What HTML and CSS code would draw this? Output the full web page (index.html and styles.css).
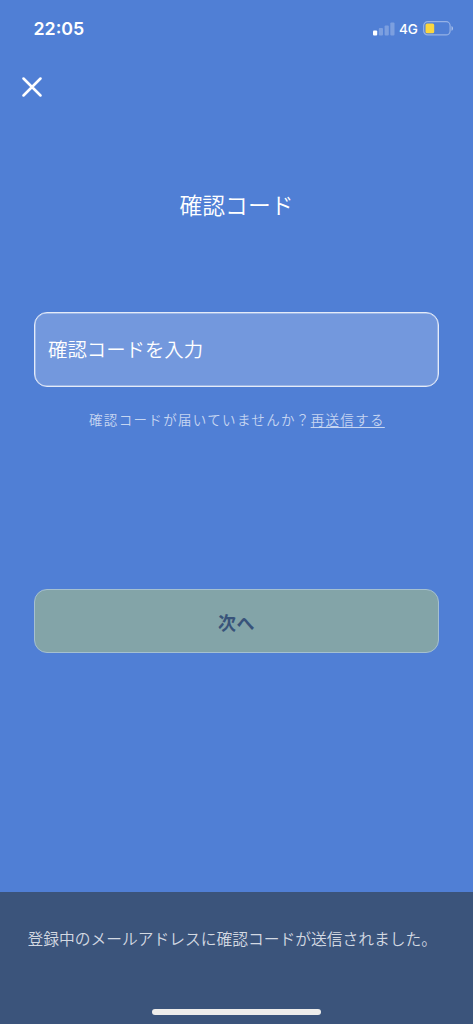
FILE: index.html
```html
<!DOCTYPE html>
<html lang="ja">
<head>
<meta charset="utf-8">
<title>確認コード</title>
<link rel="stylesheet" href="styles.css">
</head>
<body>
<div class="screen">
  <header class="status">
    <span class="time">22:05</span>
    <div class="indicators">
      <svg class="signal" width="22" height="14" viewBox="0 0 22 14" fill="#fff">
        <rect x="0" y="8.500" width="4.2" height="5" rx="1"/>
        <g opacity=".25"><rect x="5.8" y="6" width="4.2" height="7.5" rx="1"/><rect x="11.6" y="3.500" width="4.2" height="10" rx="1"/><rect x="17.3" y=".5" width="4.2" height="13" rx="1"/></g>
      </svg>
      <span class="network">4G</span>
      <svg class="battery" width="31" height="15" viewBox="0 0 31 15">
        <rect x=".7" y=".7" width="26.4" height="13.2" rx="4" fill="none" stroke="#fff" stroke-opacity=".4" stroke-width="1.2"/>
        <rect x="2.5" y="2.5" width="8.7" height="9.8" rx="1.6" fill="#fbd63f"/>
        <path d="M28.5 5c2 .8 2 4 0 4.800Z" fill="#fff" opacity=".5"/>
      </svg>
    </div>
  </header>
  <button class="close" aria-label="閉じる">
    <svg width="20" height="20" viewBox="0 0 20 20" fill="none" stroke="#fff" stroke-width="2.5" stroke-linecap="round"><path d="M1.500 1.500 18.500 18.500M18.500 1.500 1.500 18.500"/></svg>
  </button>
  <main class="content">
    <h1 class="title">確認コード</h1>
    <div class="field">確認コードを入力</div>
    <p class="hint">確認コードが届いていませんか？<a class="resend">再送信する</a></p>
    <button class="next">次へ</button>
  </main>
  <footer class="notice">
    <p class="message">登録中のメールアドレスに確認コードが送信されました。</p>
    <div class="home"></div>
  </footer>
</div>
</body>
</html>
```
FILE: styles.css
```css
* { box-sizing: border-box; }
body { margin: 0; font-family: "Noto Sans CJK JP", sans-serif; }
.screen {
  display: flex;
  flex-direction: column;
  height: 1024px;
  background: #507fd5;
  color: #fff;
  overflow: hidden;
}
.status {
  display: flex;
  justify-content: space-between;
  align-items: center;
  height: 57px;
  padding: 0 19px 0 33.5px;
  font-family: Inter, sans-serif;
  font-weight: 600;
}
.time { font-size: 17.8px; }
.indicators { display: flex; align-items: center; }
.signal { margin-right: 4px; }
.network { width: 20px; margin-right: 4px; font-size: 13.5px; font-weight: 500; white-space: nowrap; }
.close {
  width: 20px;
  height: 20px;
  margin: 20px 0 0 22px;
  padding: 0;
  border: 0;
  background: none;
}
.close svg { display: block; }
.content { flex: 1; padding: 0 34px; }
.title {
  margin: 90px 0 0;
  font-size: 22.8px;
  line-height: 36px;
  font-weight: 350;
  text-align: center;
}
.field {
  height: 75px;
  margin-top: 89px;
  padding-left: 13px;
  border: 1px solid #e4ebf9;
  border-radius: 13px;
  background: #7398dd;
  box-shadow: inset 0 0 0 .5px #c9d7f2;
  font-size: 19.4px;
  line-height: 71px;
  font-weight: 350;
}
.hint {
  margin: 22px 0 0;
  padding-left: 55px;
  color: #c6d5f1;
  font-size: 13.5px;
  line-height: 20px;
  font-weight: 350;
  letter-spacing: 1.33px;
  white-space: nowrap;
}
.resend { text-decoration: underline; text-underline-offset: 1.5px; }
.next {
  display: block;
  width: 100%;
  height: 64px;
  margin-top: 160px;
  padding: 2px 0 0;
  border: 1px solid #a5c0d0;
  border-radius: 13px;
  background: #83a4a8;
  color: #38537a;
  font: 700 18px/60px "Noto Sans CJK JP", sans-serif;
  letter-spacing: .5px;
}
.notice {
  display: flex;
  flex-direction: column;
  justify-content: space-between;
  height: 132px;
  padding: 35px 0 9px 27px;
  background: #3b547b;
}
.message {
  margin: 0 0 0 .5px;
  color: #d3d9e2;
  font-size: 15.75px;
  line-height: 24px;
  font-weight: 350;
  white-space: nowrap;
}
.home { width: 169px; height: 6px; margin-left: 125px; border-radius: 3px; background: #eeedeb; }
```
